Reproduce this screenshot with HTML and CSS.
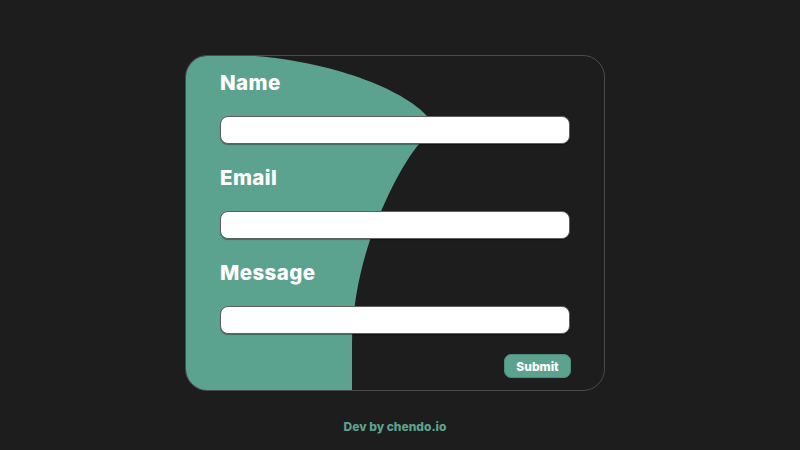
FILE: index.html
```
<!DOCTYPE html>
<html lang="en">
<head>
<meta charset="utf-8">
<title>Contact form</title>
<link rel="stylesheet" href="styles.css">
</head>
<body>
<main class="page">
  <section class="card">
    <svg class="blob" viewBox="0 0 420 336" width="420" height="336" aria-hidden="true">
      <path d="M0 0 H50 C130 2 215 30 243 62 C250 70 245 80 235 88 C217 108 195 155 185 185 C176 212 167 250 167 290 L167 336 L0 336 Z" fill="#5ca38f"/>
    </svg>
    <form class="form">
      <div class="field">
        <label class="label" for="name">Name</label>
        <input class="input" id="name" type="text">
      </div>
      <div class="field">
        <label class="label" for="email">Email</label>
        <input class="input" id="email" type="email">
      </div>
      <div class="field">
        <label class="label" for="msg">Message</label>
        <input class="input" id="msg" type="text">
      </div>
      <div class="actions">
        <button class="submit" type="button">Submit</button>
      </div>
    </form>
  </section>
  <footer class="credit">Dev by chendo.io</footer>
</main>
</body>
</html>
```
FILE: styles.css
```
* { box-sizing: border-box; }
html, body { margin: 0; padding: 0; }
body {
  background: #1d1d1d;
  font-family: Inter, "Open Sans", sans-serif;
  width: 800px;
  height: 450px;
  overflow: hidden;
}
.page {
  display: flex;
  flex-direction: column;
  align-items: center;
  padding-top: 55px;
  padding-right: 10px;
}
.card {
  position: relative;
  width: 420px;
  height: 336px;
  border: 1px solid #4b4b4b;
  border-radius: 22px;
  overflow: hidden;
  background: #1d1d1d;
}
.blob {
  position: absolute;
  left: -1px;
  top: -1px;
}
.form {
  position: relative;
  padding: 11px 34px 0 34px;
  display: flex;
  flex-direction: column;
}
.field {
  display: flex;
  flex-direction: column;
  margin-bottom: 18px;
}
.field:nth-child(3) { margin-bottom: 20px; }
.label {
  color: #fff;
  font-size: 20.5px;
  font-weight: 800;
  line-height: 28px;
  letter-spacing: 0.4px;
  padding-top: 2px;
  margin-bottom: 19px;
}
.input {
  display: block;
  width: 350px;
  height: 28px;
  border: 1px solid #5f5f5f;
  border-radius: 8px;
  background: #fff;
  box-shadow: 0 1px 1px rgba(0,0,0,0.35);
}
.actions {
  display: flex;
  justify-content: flex-end;
}
.submit {
  width: 67px;
  height: 24px;
  margin-right: -1px;
  border: 1px solid #4e8c7c;
  border-radius: 7px;
  background: #5ca38f;
  color: #fff;
  font-family: Inter, sans-serif;
  font-weight: 800;
  font-size: 12px;
  padding: 0;
}
.credit {
  margin-top: 28px;
  color: #5ca38f;
  font-size: 12px;
  font-weight: 800;
}
```
